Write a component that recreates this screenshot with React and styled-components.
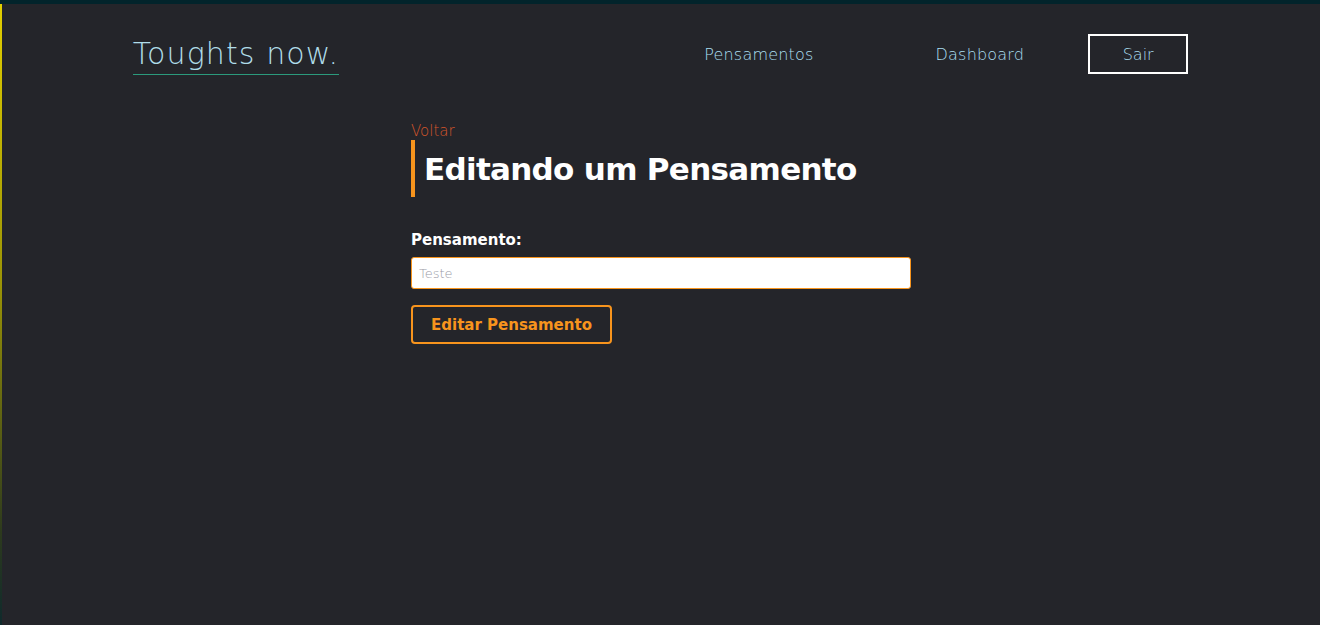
import React from 'react'
import styled, { createGlobalStyle } from 'styled-components'

const GlobalStyle = createGlobalStyle`
  * {
    box-sizing: border-box;
  }

  html, body {
    margin: 0;
    padding: 0;
    background: #24252a;
    font-family: "DejaVu Sans", "Open Sans", sans-serif;
  }
`;

const Page = styled.div`
  min-height: 625px;
  display: flex;
  border-top: 4px solid #02242b;
  background: #24252a;
`;

const LeftEdge = styled.div`
  width: 2px;
  flex-shrink: 0;
  background: linear-gradient(to bottom, #e2cf00 0%, #9b9406 45%, #2d3a1d 85%, #0f2a2c 100%);
`;

const Main = styled.div`
  flex: 1;
`;

const NavBar = styled.nav`
  width: 80%;
  margin: 0 auto;
  padding-top: 29px;
  display: flex;
  align-items: center;
  justify-content: space-between;
`;

const Logo = styled.a`
  font-size: 30px;
  font-weight: 200;
  color: #b0dde9;
  text-decoration: none;
  letter-spacing: 1.1px;
  padding-bottom: 1px;
  border-bottom: 1px solid #2b9a7c;
  line-height: 38px;
  margin-top: 2px;
  margin-left: -1px;
`;

const Menu = styled.ul`
  list-style: none;
  margin: 0;
  padding: 0;
  display: flex;
  align-items: center;
`;

const MenuItem = styled.li`
  margin-left: ${props => props.gap}px;
`;

const MenuLink = styled.a`
  font-size: 16px;
  font-weight: 200;
  color: #abdff0;
  text-decoration: none;
  letter-spacing: 0.2px;
`;

const LogoutButton = styled.a`
  display: flex;
  align-items: center;
  justify-content: center;
  width: 100px;
  height: 40px;
  border: 2px solid #ffffff;
  font-size: 16px;
  font-weight: 200;
  color: #abdff0;
  text-decoration: none;
`;

const Content = styled.main`
  width: 500px;
  margin: 0 auto;
  padding-top: 47px;
`;

const BackLink = styled.a`
  display: block;
  font-size: 15px;
  font-weight: 200;
  color: #d4552a;
  text-decoration: none;
  line-height: 18px;
`;

const TitleBox = styled.div`
  border-left: 4px solid #f7941d;
  padding-left: 9px;
  height: 57px;
  display: flex;
  align-items: center;
`;

const Title = styled.h1`
  margin: 0;
  font-size: 31px;
  font-weight: 600;
  color: #ffffff;
  letter-spacing: -0.7px;
`;

const Form = styled.form`
  margin-top: 33px;
  display: flex;
  flex-direction: column;
  align-items: flex-start;
`;

const Label = styled.label`
  font-size: 15px;
  font-weight: 700;
  color: #ffffff;
  line-height: 20px;
  margin-bottom: 7px;
`;

const Input = styled.input`
  width: 500px;
  height: 32px;
  padding: 0 7px;
  border: 1px solid #f7941d;
  border-radius: 3px;
  background: #ffffff;
  font-family: inherit;
  font-size: 13px;
  font-weight: 200;
  outline: none;

  &::placeholder {
    color: #9a9aa6;
  }
`;

const SubmitButton = styled.button`
  margin-top: 16px;
  width: 201px;
  height: 39px;
  border: 2px solid #f7941d;
  border-radius: 4px;
  background: transparent;
  color: #f7941d;
  font-family: inherit;
  font-size: 15px;
  font-weight: 700;
  cursor: pointer;
`;

const App = () => {
  return (
    <>
      <GlobalStyle />
      <Page>
        <LeftEdge />
        <Main>
          <NavBar>
            <Logo href="#">Toughts now.</Logo>
            <Menu>
              <MenuItem gap={0}>
                <MenuLink href="#">Pensamentos</MenuLink>
              </MenuItem>
              <MenuItem gap={122}>
                <MenuLink href="#">Dashboard</MenuLink>
              </MenuItem>
              <MenuItem gap={64}>
                <LogoutButton href="#">Sair</LogoutButton>
              </MenuItem>
            </Menu>
          </NavBar>
          <Content>
            <BackLink href="#">Voltar</BackLink>
            <TitleBox>
              <Title>Editando um Pensamento</Title>
            </TitleBox>
            <Form onSubmit={e => e.preventDefault()}>
              <Label htmlFor="title">Pensamento:</Label>
              <Input id="title" name="title" placeholder="Teste" />
              <SubmitButton type="submit">Editar Pensamento</SubmitButton>
            </Form>
          </Content>
        </Main>
      </Page>
    </>
  )
}

export default App
